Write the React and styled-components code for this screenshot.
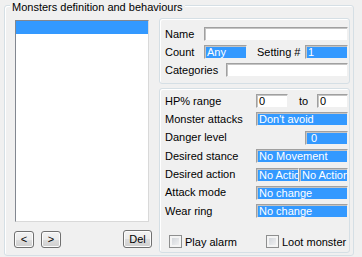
import React from 'react'
import styled, { createGlobalStyle } from 'styled-components';

const GlobalStyle = createGlobalStyle`
    html, body {
        margin:0;
        background:#f0f0f0;
    }
    body {
        font-family:"Liberation Sans", Arial, sans-serif;
        font-size:11px;
        color:#000;
    }
`;

const Frame = styled.div`
    position:relative;
    box-sizing:border-box;
    width:350px;
    height:251px;
    margin:5px 0 0 4px;
    border:1px solid #d5dfe5;
    border-radius:3px;
    box-shadow:inset 1px 1px 0 #fff;
    padding:12px 3px 2px 10px;
    display:flex;
    gap:10px;
`;

const Title = styled.span`
    position:absolute;
    left:5px;
    top:-5px;
    padding:0 2px;
    background:#f0f0f0;
    line-height:13px;
    white-space:nowrap;
`;

const LeftCol = styled.div`
    width:134px;
    display:flex;
    flex-direction:column;
`;

const ListBox = styled.div`
    box-sizing:border-box;
    height:202px;
    margin-top:2px;
    background:#fff;
    border:1px solid;
    border-color:#828790 #d9d9d9 #d9d9d9 #828790;
`;

const ListItem = styled.div`
    height:13px;
    background:${props => props.selected ? '#3399ff' : 'transparent'};
`;

const ButtonRow = styled.div`
    display:flex;
    align-items:flex-start;
    margin:9px -3px 0 -1px;
`;

const Button = styled.button`
    box-sizing:border-box;
    width:${props => props.w}px;
    height:${props => props.h}px;
    margin-left:${props => props.ml || '0'};
    margin-top:${props => props.mt || 0}px;
    padding:0;
    border:1px solid #707070;
    border-radius:3px;
    background:linear-gradient(#f2f2f2 0%, #ebebeb 50%, #dddddd 51%, #cfcfcf 100%);
    box-shadow:inset 0 0 0 1px #fcfcfc;
    font-family:"Liberation Sans", Arial, sans-serif;
    font-size:11px;
    color:#000;
    line-height:13px;
`;

const RightCol = styled.div`
    width:191px;
    display:flex;
    flex-direction:column;
    gap:4px;
`;

const Group = styled.div`
    box-sizing:border-box;
    height:${props => props.h}px;
    border:1px solid #d5dfe5;
    border-radius:3px;
    box-shadow:inset 1px 1px 0 #fff;
    padding:${props => props.pad};
    display:flex;
    flex-direction:column;
    gap:${props => props.gap}px;
`;

const Row = styled.div`
    display:flex;
    align-items:center;
    height:14px;
`;

const Label = styled.span`
    flex:none;
    width:${props => props.w ? props.w + 'px' : 'auto'};
    margin-left:${props => props.ml || 0}px;
    white-space:nowrap;
    line-height:13px;
`;

const Field = styled.div`
    box-sizing:border-box;
    height:14px;
    ${props => props.w ? `width:${props.w}px; flex:none;` : 'flex:1;'}
    margin-left:${props => props.ml || '0'};
    padding-left:2px;
    background:${props => props.selected ? '#3399ff' : '#fff'};
    color:${props => props.selected ? '#fff' : '#000'};
    border:1px solid;
    border-color:#a0a0a0 #f0f0f0 #f0f0f0 #a0a0a0;
    box-shadow:inset 1px 1px 0 #c4c4c4;
    line-height:12px;
    white-space:nowrap;
    overflow:hidden;
`;

const CheckRow = styled.div`
    display:flex;
    align-items:center;
    height:13px;
    margin-top:auto;
`;

const CheckItem = styled.label`
    display:flex;
    align-items:center;
    gap:3px;
    width:${props => props.w ? props.w + 'px' : 'auto'};
    margin-left:${props => props.ml || 0}px;
    white-space:nowrap;
`;

const CheckBox = styled.span`
    box-sizing:border-box;
    width:13px;
    height:13px;
    border:1px solid #8e8f8f;
    background:linear-gradient(135deg, #cbcfd5 0%, #f6f6f6 100%);
    box-shadow:inset 0 0 0 2px #f4f4f4;
`;

function App() {
    return (
        <>
            <GlobalStyle />
            <Frame>
                <Title>Monsters definition and behaviours</Title>
                <LeftCol>
                    <ListBox>
                        <ListItem selected />
                    </ListBox>
                    <ButtonRow>
                        <Button w={20} h={17}>&lt;</Button>
                        <Button w={20} h={17} ml="7px">&gt;</Button>
                        <Button w={29} h={18} ml="auto" mt={-1}>Del</Button>
                    </ButtonRow>
                </LeftCol>
                <RightCol>
                    <Group h={66} pad="8px 1px 0 5px" gap={4}>
                        <Row>
                            <Label w={39}>Name</Label>
                            <Field />
                        </Row>
                        <Row>
                            <Label w={39}>Count</Label>
                            <Field w={43} selected>Any</Field>
                            <Label ml={10}>Setting #</Label>
                            <Field w={43} ml="auto" selected>1</Field>
                        </Row>
                        <Row>
                            <Label w={61}>Categories</Label>
                            <Field />
                        </Row>
                    </Group>
                    <Group h={165} pad="5px 1px 4px 5px" gap={4.4}>
                        <Row>
                            <Label w={91}>HP% range</Label>
                            <Field w={32}>0</Field>
                            <Label ml={11}>to</Label>
                            <Field w={31} ml="auto">0</Field>
                        </Row>
                        <Row>
                            <Label w={91}>Monster attacks</Label>
                            <Field selected>Don't avoid</Field>
                        </Row>
                        <Row>
                            <Label w={91}>Danger level</Label>
                            <Field w={43} ml="auto" selected>&nbsp;0</Field>
                        </Row>
                        <Row>
                            <Label w={91}>Desired stance</Label>
                            <Field selected>No Movement</Field>
                        </Row>
                        <Row>
                            <Label w={91}>Desired action</Label>
                            <Field w={43} selected>No Action</Field>
                            <Field selected>No Action</Field>
                        </Row>
                        <Row>
                            <Label w={91}>Attack mode</Label>
                            <Field selected>No change</Field>
                        </Row>
                        <Row>
                            <Label w={91}>Wear ring</Label>
                            <Field selected>No change</Field>
                        </Row>
                        <CheckRow>
                            <CheckItem w={97} ml={4}>
                                <CheckBox />
                                Play alarm
                            </CheckItem>
                            <CheckItem>
                                <CheckBox />
                                Loot monster
                            </CheckItem>
                        </CheckRow>
                    </Group>
                </RightCol>
            </Frame>
        </>
    )
}

export default App
